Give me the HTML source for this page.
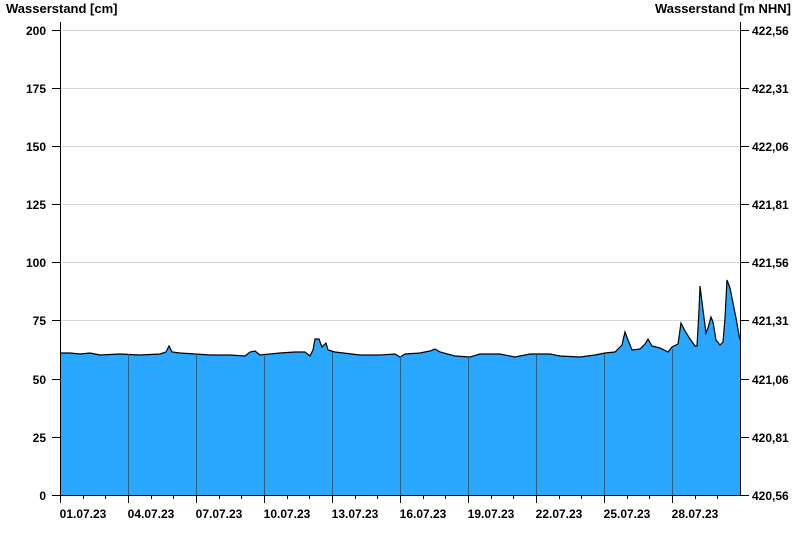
<!DOCTYPE html>
<html><head><style>body{margin:0;background:#fff}svg{display:block}</style></head><body>
<svg width="800" height="550" xmlns="http://www.w3.org/2000/svg" font-family="Liberation Sans, Arial, sans-serif" font-weight="bold" font-size="12" fill="#000">
<rect width="800" height="550" fill="#fff"/>
<g stroke="#d8d8d8" stroke-width="1">
<line x1="61" y1="30.5" x2="740" y2="30.5"/><line x1="61" y1="88.5" x2="740" y2="88.5"/><line x1="61" y1="146.5" x2="740" y2="146.5"/><line x1="61" y1="204.5" x2="740" y2="204.5"/><line x1="61" y1="262.5" x2="740" y2="262.5"/><line x1="61" y1="320.5" x2="740" y2="320.5"/><line x1="61" y1="379.5" x2="740" y2="379.5"/><line x1="61" y1="437.5" x2="740" y2="437.5"/>
</g>
<polygon fill="#2aa8ff" points="61,495 61,353 70,353 80,354 90,353 100,355 120,354 140,355 160,354 166,352 169,346 172,352 180,353 195,354 210,355 230,355 245,356 250,352 255,351 260,355 280,353 295,352 305,352 310,356 313,350 315,339 319,339 322,347 326,343 328,350 335,352 360,355 380,355 395,354 400,357 405,354 420,353 430,351 435,349 440,352 455,356 470,357 480,354 500,354 515,357 530,354 550,354 560,356 580,357 595,355 605,353 615,352 622,345 625,332 628,340 632,350 640,349 645,344 648,339 652,346 660,348 668,352 672,347 678,344 681,323 685,331 690,339 695,346 697,346 699,310 700,286 703,310 706,333 708,328 711,317 713,322 716,340 720,345 723,342 725,318 727,280 730,288 733,303 736,318 739,335 740,340 740,495"/>
<polyline fill="none" stroke="#000" stroke-width="1.2" points="61,353 70,353 80,354 90,353 100,355 120,354 140,355 160,354 166,352 169,346 172,352 180,353 195,354 210,355 230,355 245,356 250,352 255,351 260,355 280,353 295,352 305,352 310,356 313,350 315,339 319,339 322,347 326,343 328,350 335,352 360,355 380,355 395,354 400,357 405,354 420,353 430,351 435,349 440,352 455,356 470,357 480,354 500,354 515,357 530,354 550,354 560,356 580,357 595,355 605,353 615,352 622,345 625,332 628,340 632,350 640,349 645,344 648,339 652,346 660,348 668,352 672,347 678,344 681,323 685,331 690,339 695,346 697,346 699,310 700,286 703,310 706,333 708,328 711,317 713,322 716,340 720,345 723,342 725,318 727,280 730,288 733,303 736,318 739,335 740,340"/>
<g stroke="#2b5d7f" stroke-width="1">
<line x1="128.5" y1="354" x2="128.5" y2="495"/><line x1="196.5" y1="354" x2="196.5" y2="495"/><line x1="264.5" y1="356" x2="264.5" y2="495"/><line x1="332.5" y1="352" x2="332.5" y2="495"/><line x1="400.5" y1="356" x2="400.5" y2="495"/><line x1="468.5" y1="357" x2="468.5" y2="495"/><line x1="536.5" y1="355" x2="536.5" y2="495"/><line x1="604.5" y1="354" x2="604.5" y2="495"/><line x1="672.5" y1="349" x2="672.5" y2="495"/>
</g>
<g stroke="#000" stroke-width="1">
<line x1="60.5" y1="22" x2="60.5" y2="495"/><line x1="740.5" y1="22" x2="740.5" y2="495"/>
<line x1="52" y1="495.5" x2="741" y2="495.5"/>
<path d="M52 30.5h8M52 88.5h8M52 146.5h8M52 204.5h8M52 262.5h8M52 320.5h8M52 379.5h8M52 437.5h8"/>
<path d="M741 30.5h8M741 88.5h8M741 146.5h8M741 204.5h8M741 262.5h8M741 320.5h8M741 379.5h8M741 437.5h8M741 495.5h8"/>
<path d="M60.5 495v8M128.5 495v8M196.5 495v8M264.5 495v8M332.5 495v8M400.5 495v8M468.5 495v8M536.5 495v8M604.5 495v8M672.5 495v8"/>
<path d="M83.5 495v4M105.5 495v4M151.5 495v4M173.5 495v4M219.5 495v4M241.5 495v4M287.5 495v4M309.5 495v4M355.5 495v4M377.5 495v4M423.5 495v4M445.5 495v4M491.5 495v4M513.5 495v4M559.5 495v4M581.5 495v4M627.5 495v4M649.5 495v4M695.5 495v4M717.5 495v4"/>
</g>
<text x="6" y="13" font-size="13">Wasserstand [cm]</text>
<text x="791" y="13" font-size="13" text-anchor="end">Wasserstand [m NHN]</text>
<g text-anchor="end">
<text x="46" y="35">200</text><text x="46" y="93">175</text><text x="46" y="151">150</text><text x="46" y="209">125</text><text x="46" y="267">100</text><text x="46" y="325">75</text><text x="46" y="384">50</text><text x="46" y="442">25</text><text x="46" y="500">0</text>
</g>
<g>
<text x="752" y="35">422,56</text><text x="752" y="93">422,31</text><text x="752" y="151">422,06</text><text x="752" y="209">421,81</text><text x="752" y="267">421,56</text><text x="752" y="325">421,31</text><text x="752" y="384">421,06</text><text x="752" y="442">420,81</text><text x="752" y="500">420,56</text>
</g>
<g text-anchor="middle">
<text x="83" y="518">01.07.23</text><text x="151" y="518">04.07.23</text><text x="219" y="518">07.07.23</text><text x="287" y="518">10.07.23</text><text x="355" y="518">13.07.23</text><text x="423" y="518">16.07.23</text><text x="491" y="518">19.07.23</text><text x="559" y="518">22.07.23</text><text x="627" y="518">25.07.23</text><text x="695" y="518">28.07.23</text>
</g>
</svg>
</body></html>
